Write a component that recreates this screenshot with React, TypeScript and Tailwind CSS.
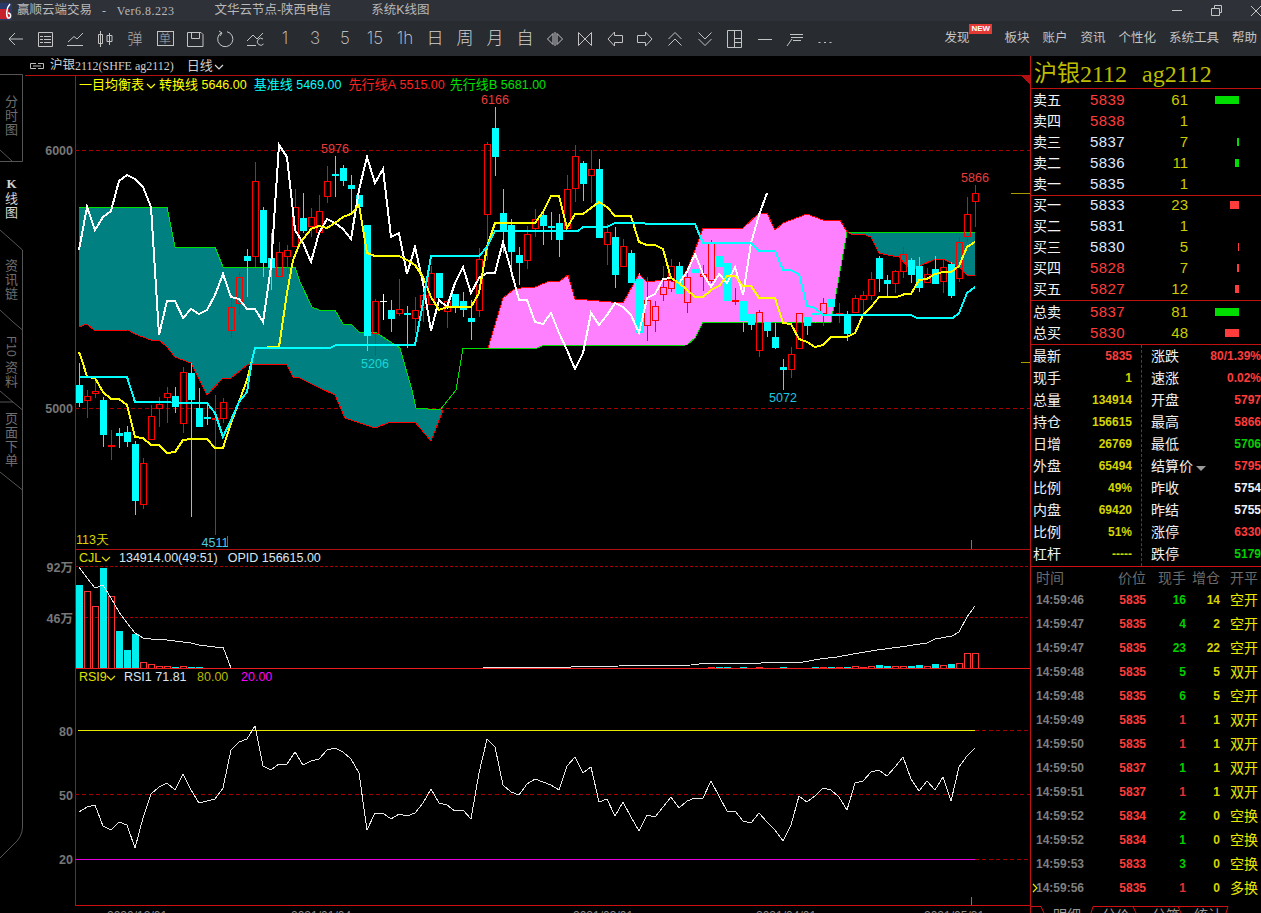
import React from "react";

type Candle = [string, number, number, number, number];

// [colour, body top, body bottom, wick top, wick bottom] in page pixels, one per day
const candles: Candle[] = [
  ["c",385,403,363,407],["r",396,401,390,418],["r",391,394,377,398],["c",400,435,397,447],["r",445,447,430,460],
  ["c",433,436,428,448],["c",432,442,426,447],["c",444,501,441,515],["r",463,505,458,509],["r",416,440,405,440],
  ["r",404,409,397,427],["r",393,398,387,423],["c",396,407,387,413],["r",372,424,367,433],["c",373,400,363,517],
  ["c",408,427,388,427],["c",417,419,405,425],["r",418,419,395,535],["r",402,419,398,423],["r",307,331,298,338],
  ["r",277,304,272,315],["c",256,261,249,297],["r",181,257,162,267],["c",210,263,207,277],["c",258,268,233,290],
  ["r",252,277,242,277],["r",250,257,245,273],["r",207,247,189,247],["c",218,231,193,233],["r",217,227,208,237],
  ["r",211,233,195,233],["r",181,197,166,203],["c",174,176,156,197],["c",168,181,165,186],["c",185,189,175,213],
  ["c",195,207,195,207],["c",225,336,225,351],["r",301,334,299,356],["w",301,302,294,320],["c",310,319,300,332],
  ["r",309,314,279,316],["c",313,315,306,348],["r",310,319,297,333],["r",295,308,280,322],["r",273,305,266,305],
  ["c",273,298,273,298],["r",301,312,300,328],["c",294,306,294,313],["c",301,310,292,317],["c",318,322,300,340],
  ["r",259,311,248,317],["r",144,215,142,260],["c",128,157,107,176],["c",213,231,189,253],["c",225,252,219,277],
  ["c",255,263,247,285],["r",234,261,226,269],["r",219,229,209,237],["c",215,226,212,245],["c",226,228,212,240],
  ["c",223,240,214,257],["r",189,229,175,229],["r",156,189,145,202],["c",163,184,161,201],["r",169,176,150,203],
  ["c",169,238,159,238],["r",232,245,224,265],["c",237,275,227,288],["r",246,267,239,267],["c",253,283,250,283],
  ["c",279,333,273,340],["r",300,326,277,341],["r",306,321,301,332],["r",287,295,266,301],["r",266,289,259,292],
  ["c",266,294,262,300],["r",277,303,267,313],["c",269,273,253,290],["r",274,277,265,291],["r",242,281,240,283],
  ["c",256,267,256,280],["c",263,301,257,303],["r",300,302,288,305],["c",301,321,293,332],["c",314,325,309,330],
  ["r",312,351,310,357],["c",322,331,322,337],["c",337,348,323,349],["c",367,370,359,390],["r",354,370,347,378],
  ["r",313,349,313,349],["c",317,326,313,335],["c",313,315,305,323],["r",303,314,298,326],["c",299,307,285,307],
  ["r",313,314,303,323],["c",315,334,311,341],["r",298,313,295,313],["r",295,300,291,313],["r",279,296,272,300],
  ["c",258,279,256,292],["c",280,284,275,296],["r",271,284,270,293],["r",254,272,247,278],["c",260,275,258,283],
  ["c",266,288,257,292],["r",274,283,268,283],["c",269,284,256,284],["r",267,282,260,293],["c",264,296,262,298],
  ["r",242,279,237,282],["r",214,237,197,242],["r",193,202,185,227],
];

const cx = (i: number) => 79.5 + 8 * i;

const white = "79,250 87,207 95,230 103,217 111,211 119,181 127,175 135,179 143,187 151,207 159,335 167,301 175,301 183,318 191,309 199,314 207,310 215,295 223,274 231,297 239,299 247,309 255,309 263,322 271,267 279,145 287,157 295,230 303,243 311,262 319,233 327,219 335,223 343,229 351,239 359,190 367,157 375,183 383,169 391,237 399,233 407,274 415,247 423,283 431,331 439,300 447,307 455,283 463,267 471,293 479,278 487,273 495,273 503,242 511,270 519,300 527,300 535,322 543,324 551,313 559,333 567,350 575,369 583,353 591,313 599,325 607,315 615,303 623,307 631,315 639,333 647,298 655,294 663,279 671,278 679,283 687,272 695,254 703,274 711,287 719,274 727,283 735,267 743,295 751,243 759,215 767,193";
const yellow = "79,352 82,360 87,377 95,378 103,392 111,399 119,399 127,405 135,437 143,438 151,445 159,445 167,453 175,452 183,440 191,439 207,439 215,448 223,448 231,423 239,402 247,380 255,348 279,347 287,293 293,260 300,243 311,229 319,226 327,228 335,223 343,217 351,214 359,205 367,253 375,256 399,256 407,260 415,265 423,277 431,297 439,310 447,307 471,307 479,293 487,247 495,223 535,223 543,212 551,196 559,196 567,228 575,214 583,214 599,202 607,207 615,216 631,216 639,242 647,245 655,245 663,249 671,278 679,283 687,290 695,297 703,297 711,290 719,286 727,276 735,276 743,286 751,286 759,298 775,298 783,323 791,324 799,339 807,342 815,347 823,345 831,337 847,337 855,333 863,315 871,307 879,297 897,297 905,294 911,294 919,280 927,279 935,274 943,272 951,272 959,266 967,247 975,242";
const kijun = "79,377 127,377 135,402 207,403 215,413 223,437 231,420 239,402 247,392 252,360 255,348 330,348 336,345 415,345 423,303 431,256 479,256 487,247 495,231 578,231 583,227 607,227 615,223 639,223 650,224 695,224 703,243 751,243 759,251 775,251 783,270 791,270 799,274 807,306 815,308 823,315 911,315 917,318 953,318 959,313 967,293 975,287";

const greenTop = "79,207 167,207 175,247 215,247 223,267 295,267 300,282 312,307 319,310 335,310 343,324 351,324 359,332 375,332 383,337 400,348 407,373 412,390 416,408 440,410 456,390 463,348 537,348 542,346 687,345 695,338 703,322 831,322 847,232 975,232";
const redEdge = "79,327 87,324 95,331 128,330 135,334 151,340 159,340 167,347 175,357 183,360 191,363 207,395 223,378 231,378 247,365 267,364 287,365 293,377 300,378 320,388 335,395 345,418 375,428 390,422 415,422 431,441 443,410";
const pinkTop = "488,348 503,298 513,290 525,287 533,288 547,282 560,281 568,275 575,299 623,303 639,274 647,282 663,280 679,282 687,270 695,250 703,228 743,228 759,213 767,213 775,230 783,223 807,214 823,220 840,220 847,232";
const redTail = "847,232 851,234 863,234 871,237 879,253 888,255 899,257 911,270 920,266 935,259 943,259 959,267 967,275 975,275";

const teal1 = "79,207 167,207 175,247 215,247 223,267 295,267 300,282 312,307 319,310 335,310 343,324 351,324 359,332 375,332 383,337 400,348 407,373 412,390 416,408 443,410 431,441 415,422 390,422 375,428 345,418 335,395 320,388 300,378 293,377 287,365 267,364 247,365 231,378 223,378 207,395 191,363 183,360 175,357 167,347 159,340 151,340 135,334 128,330 95,331 87,324 79,327";
const pink = `${pinkTop} 831,322 703,322 695,338 687,345 542,346 537,348`;
const teal2 = `847,232 975,232 ${redTail.split(" ").reverse().join(" ")}`;

const volHead: [string, number][] = [["c",585],["r",591],["r",606],["c",568],["r",596],["c",631],["c",650],["c",634],["r",662],["r",664],["r",666],["r",666],["c",667],["r",666],["c",667],["c",667]];
const volTail: [number, string, number][] = [[79,"r",667],[80,"c",667],[81,"c",667],[83,"c",667],[85,"r",667],[88,"c",667],[92,"c",667],[93,"r",667],[94,"c",667],[95,"r",667],[96,"c",667],[97,"r",666],[98,"r",667],[99,"r",666],[100,"c",665],[101,"c",666],[102,"r",666],[103,"r",666],[104,"c",666],[105,"c",665],[106,"r",666],[107,"c",664],[108,"r",665],[109,"c",664],[110,"r",663],[111,"r",653],[112,"r",653]];
const volMa1 = "79,567 87,578 95,588 103,585 111,598 119,612 127,623 135,633 143,638 151,639 159,639 167,640 175,641 191,643 199,645 215,647 223,647 231,668";
const volMa2 = "483,667 520,667 571,667 619,666 691,665 707,663 731,663 743,664 779,662 803,662 820,659 837,657 853,654 877,650 900,647 927,643 935,639 952,636 959,632 967,617 975,606";

const rsiY = [812,807,805,826,830,822,825,848,818,794,787,783,790,774,790,803,801,799,788,750,742,739,726,766,770,764,764,752,765,761,759,750,748,752,759,773,830,813,813,819,814,816,813,803,789,803,805,811,810,819,773,739,747,785,792,795,784,779,782,785,790,766,757,773,767,802,799,816,802,817,831,815,817,807,797,808,801,798,798,781,796,811,811,821,823,813,822,830,841,825,796,802,796,788,790,797,810,783,781,772,770,776,767,757,779,791,781,790,777,801,767,756,748];

const book = [
  { label: "卖五", price: "5839", red: true, vol: "61", bar: 24, col: "bg-[#00dd00]" },
  { label: "卖四", price: "5838", red: true, vol: "1", bar: 0, col: "bg-[#00dd00]" },
  { label: "卖三", price: "5837", red: false, vol: "7", bar: 2, col: "bg-[#00dd00]" },
  { label: "卖二", price: "5836", red: false, vol: "11", bar: 4, col: "bg-[#00dd00]" },
  { label: "卖一", price: "5835", red: false, vol: "1", bar: 0, col: "bg-[#00dd00]" },
  { label: "买一", price: "5833", red: false, vol: "23", bar: 9, col: "bg-[#ff3c3c]" },
  { label: "买二", price: "5831", red: false, vol: "1", bar: 0, col: "bg-[#ff3c3c]" },
  { label: "买三", price: "5830", red: false, vol: "5", bar: 1, col: "bg-[#ff3c3c]" },
  { label: "买四", price: "5828", red: true, vol: "7", bar: 2, col: "bg-[#ff3c3c]" },
  { label: "买五", price: "5827", red: true, vol: "12", bar: 4, col: "bg-[#ff3c3c]" },
  { label: "总卖", price: "5837", red: true, vol: "81", bar: 24, col: "bg-[#00dd00]" },
  { label: "总买", price: "5830", red: true, vol: "48", bar: 14, col: "bg-[#ff3c3c]" },
];

const statsLeft: [string, string, string][] = [
  ["最新", "5835", "text-[#ff3c3c]"], ["现手", "1", "text-[#d4d400]"], ["总量", "134914", "text-[#d4d400]"],
  ["持仓", "156615", "text-[#d4d400]"], ["日增", "26769", "text-[#d4d400]"], ["外盘", "65494", "text-[#d4d400]"],
  ["比例", "49%", "text-[#d4d400]"], ["内盘", "69420", "text-[#d4d400]"], ["比例", "51%", "text-[#d4d400]"],
  ["杠杆", "-----", "text-[#d4d400]"],
];
const statsRight: [string, string, string][] = [
  ["涨跌", "80/1.39%", "text-[#ff3c3c]"], ["速涨", "0.02%", "text-[#ff3c3c]"], ["开盘", "5797", "text-[#ff3c3c]"],
  ["最高", "5866", "text-[#ff3c3c]"], ["最低", "5706", "text-[#00d000]"], ["结算价", "5795", "text-[#ff3c3c]"],
  ["昨收", "5754", "text-[#eef2ff]"], ["昨结", "5755", "text-[#eef2ff]"], ["涨停", "6330", "text-[#ff3c3c]"],
  ["跌停", "5179", "text-[#00d000]"],
];

const trades: [string, string, string, boolean, string, string][] = [
  ["14:59:46", "5835", "16", true, "14", "空开"],
  ["14:59:47", "5835", "4", true, "2", "空开"],
  ["14:59:47", "5835", "23", true, "22", "空开"],
  ["14:59:48", "5835", "5", true, "5", "双开"],
  ["14:59:48", "5835", "6", true, "5", "空开"],
  ["14:59:49", "5835", "1", false, "1", "双开"],
  ["14:59:50", "5835", "1", false, "1", "双开"],
  ["14:59:50", "5837", "1", true, "1", "双开"],
  ["14:59:51", "5837", "1", false, "1", "双开"],
  ["14:59:52", "5834", "2", true, "0", "空换"],
  ["14:59:52", "5834", "1", true, "0", "空换"],
  ["14:59:53", "5833", "3", true, "0", "空换"],
  ["14:59:56", "5835", "1", false, "0", "多换"],
];

function Chevron({ className }: { className: string }) {
  return (
    <svg width="10" height="6" viewBox="0 0 10 6" className={className}>
      <path d="M1 1L5 5L9 1" fill="none" stroke="currentColor" strokeWidth="1.2" />
    </svg>
  );
}

function Ico({ d }: { d: string }) {
  return (
    <svg width="22" height="22" viewBox="0 0 22 22" fill="none" stroke="#c4c4c4" strokeWidth="1">
      <path d={d} />
    </svg>
  );
}

function Glyph({ t }: { t: string }) {
  return <span className="font-['Inter','Noto_Sans_CJK_SC',sans-serif] font-extralight text-[17px] leading-none text-[#d0d0d0]">{t}</span>;
}

const tools: React.ReactNode[] = [
  <Ico d="M5 11H19M11 5L5 11L11 17" />,
  <Ico d="M4.500 4.500H18.500V18.500H4.500ZM6 8.500H9M10 8.500H17M6 11.500H9M10 11.500H17M6 14.500H9M10 14.500H17" />,
  <Ico d="M3 17.500H19M4 14L10 8.500L13 11L19 5" />,
  <Ico d="M6.500 3V19M4.500 6.500H8.500V15.500H4.500ZM15.500 5V17M13 7.500H18V13.500H13Z" />,
  <span className="text-[15px] font-light leading-none text-[#a8a8a8]">弹</span>,
  <div className="w-[17px] h-[15px] border border-[#c4c4c4] flex items-center justify-center text-[12px] font-light leading-none text-[#b0b0b0]">单</div>,
  <Ico d="M3.500 4.500H17L19 6.500V18.500H3.500ZM7.500 4.500V10.500H15.500V4.500" />,
  <Ico d="M7.500 4.500A7.600 7.600 0 1 0 13 3.700M5 3L8 5L6 8" />,
  <Ico d="M3 17.500H12M3 13L9 7L13 11L19 5M19 11A3.500 3.500 0 1 0 19.500 16" />,
  <Glyph t="1" />, <Glyph t="3" />, <Glyph t="5" />, <Glyph t="15" />, <Glyph t="1h" />,
  <Glyph t="日" />, <Glyph t="周" />, <Glyph t="月" />, <Glyph t="自" />,
  <Ico d="M9 5.500L3.500 11L9 16.500ZM13 5.500L18.500 11L13 16.500ZM11 4V18" />,
  <Ico d="M4.500 4.500V17.500L11 11ZM17.500 4.500V17.500L11 11Z" />,
  <Ico d="M10.500 4L4 11L10.500 18V14.500H18.500V7.500H10.500Z" />,
  <Ico d="M11.500 4L18 11L11.500 18V14.500H3.500V7.500H11.500Z" />,
  <Ico d="M4.500 11L11 4.500L17.500 11M4.500 17.500L11 11L17.500 17.500" />,
  <Ico d="M4.500 4.500L11 11L17.500 4.500M4.500 11L11 17.500L17.500 11" />,
  <Ico d="M3.500 2.500H17.500V19.500H3.500ZM10.500 2.500V19.500M10.500 10.500H17.500M10.500 14.500H17.500" />,
  <Ico d="M4 11.500H18" />,
  <Ico d="M6 6.500H19M7 9.500H19M9 12.500H17M3 18L8 11" />,
  <Ico d="M4.500 14.500H6.500M10 14.500H12M15.500 14.500H17.500" />,
];

function TitleBar() {
  return (
    <div className="h-[21px] bg-[#2e3138] flex items-center text-[#b8b8b8] text-[12.500px] relative shrink-0">
      <svg width="14" height="20" viewBox="0 0 14 20" className="shrink-0">
        <rect x="0" y="2" width="12" height="17" fill="#2a3a68" />
        <rect x="0" y="8" width="9" height="10" fill="#c8202a" />
        <path d="M10 3C6 7 6 15 8 17C11 18 12 12 8 12" fill="none" stroke="#ffffff" strokeWidth="1.500" />
      </svg>
      <span className="ml-[3px]">赢顺云端交易</span>
      <span className="ml-[10px] font-['Liberation_Serif',serif] text-[12px] tracking-[0.500px] whitespace-pre">-   Ver6.8.223</span>
      <span className="ml-[40px]">文华云节点-陕西电信</span>
      <span className="ml-[40px]">系统K线图</span>
      <div className="ml-auto flex items-center">
        <svg width="100" height="21" viewBox="0 0 100 21" fill="none" stroke="#c4c4c4" strokeWidth="1">
          <path d="M11 10.500H21" />
          <path d="M50.500 8.500H58.500V15.500H50.500ZM53.500 8.500V5.500H60.500V12.500H58.500" />
          <path d="M90 6L100 16M100 6L90 16" />
        </svg>
      </div>
    </div>
  );
}

function Toolbar() {
  return (
    <div className="h-[35px] bg-[#282b30] flex items-center shrink-0">
      {tools.map((t, i) => (
        <div key={i} className="w-[30px] h-[30px] flex items-center justify-center">{t}</div>
      ))}
      <div className="ml-auto flex items-center gap-[13px] pr-[4px] text-[12.500px] text-[#c4c4c4]">
        <span className="relative mr-[22px]">
          发现
          <span className="absolute -top-[5px] left-[25px] bg-[#e53935] text-white text-[8px] font-bold leading-[10px] px-[2px]">NEW</span>
        </span>
        <span>板块</span>
        <span>账户</span>
        <span>资讯</span>
        <span>个性化</span>
        <span>系统工具</span>
        <span>帮助</span>
      </div>
    </div>
  );
}

function Sidebar() {
  return (
    <div className="w-[23px] shrink-0 relative flex flex-col items-center pt-[38px] text-[13px] leading-[14px] text-[#6e6e6e] font-['Noto_Sans_CJK_SC',sans-serif]">
      <svg width="23" height="857" viewBox="0 56 23 857" className="absolute left-0 top-0" fill="none" stroke="#555555" strokeWidth="1">
        <path d="M0 74.500H22.500V161.500H0M0 150L12 161" />
        <path d="M0 230L13 241.500L22.500 250V330L13 322L0 310" />
        <path d="M22.500 330V410L13 402H0M0 391L13 402" />
        <path d="M22.500 410V827Q22.500 837 13 845L0 858M0 472L22.500 490" />
      </svg>
      <div className="flex flex-col items-center"><span>分</span><span>时</span><span>图</span></div>
      <div className="flex flex-col items-center mt-[41px] text-[#d4d4d4]"><span className="font-bold font-['Liberation_Serif',serif]">K</span><span>线</span><span>图</span></div>
      <div className="flex flex-col items-center mt-[39px]"><span>资</span><span>讯</span><span>链</span></div>
      <div className="flex flex-col items-center mt-[36px]"><span className="[writing-mode:vertical-rl] leading-none text-[12px] h-[24px] font-['Liberation_Sans',sans-serif]">F10</span><span>资</span><span>料</span></div>
      <div className="flex flex-col items-center mt-[23px]"><span>页</span><span>面</span><span>下</span><span>单</span></div>
    </div>
  );
}

function AxisLabel({ y, t, offset }: { y: number; t: string; offset: number }) {
  return (
    <span
      className="absolute right-[2px] text-[12.500px] leading-none font-bold text-[#777777] -translate-y-1/2"
      style={{ top: y - offset + 1 }}
    >
      {t}
    </span>
  );
}

const DashRed = ({ y, x1 = 75, x2 = 1030 }: { y: number; x1?: number; x2?: number }) => (
  <line x1={x1} x2={x2} y1={y + 0.5} y2={y + 0.5} stroke="#a80000" strokeDasharray="4 3" />
);

function MainPane() {
  return (
    <div className="flex h-[474px] shrink-0">
      <div className="w-[52px] relative shrink-0">
        <div className="absolute top-0 left-[2px] right-0 h-px bg-[#b01010]" />
        <AxisLabel y={150} t="6000" offset={75} />
        <AxisLabel y={408} t="5000" offset={75} />
      </div>
      <div className="relative w-[955px] shrink-0">
        <svg width="955" height="474" viewBox="75 75 955 474" shapeRendering="crispEdges" className="absolute inset-0 font-['Liberation_Sans',sans-serif]">
          <line x1="75" x2="1030" y1="75.500" y2="75.500" stroke="#b01010" />
          <line x1="75.500" x2="75.500" y1="75" y2="549" stroke="#b01010" />
          <polygon points="1020,75 1030,75 1030,85" fill="#b01010" />
          <DashRed y={150} />
          <DashRed y={408} />
          <polygon points={teal1} fill="#008080" />
          <polygon points={pink} fill="#ff80ff" />
          <polygon points={teal2} fill="#008080" />
          <polyline points={greenTop} fill="none" stroke="#00e000" />
          <polyline points={redEdge} fill="none" stroke="#ff0000" />
          <polyline points={pinkTop} fill="none" stroke="#ff0000" />
          <polyline points={redTail} fill="none" stroke="#ff0000" />
          {candles.map(([c, top, bot, wt, wb], i) => {
            const x = cx(i);
            if (c === "r") {
              return (
                <g key={i} stroke="#ff0000" fill="none">
                  <line x1={x} x2={x} y1={wt} y2={top} />
                  <line x1={x} x2={x} y1={bot} y2={wb} />
                  <rect x={x - 3} y={top + 0.5} width={6} height={Math.max(bot - top - 1, 1)} />
                </g>
              );
            }
            const col = c === "w" ? "#ffffff" : "#00ffff";
            return (
              <g key={i}>
                <line x1={x} x2={x} y1={wt} y2={wb} stroke={col} />
                <rect x={x - 3.5} y={top} width={7} height={bot - top} fill={col} />
              </g>
            );
          })}
          <polyline points={white} fill="none" stroke="#ffffff" strokeWidth="2" />
          <polyline points={yellow} fill="none" stroke="#ffff00" strokeWidth="2" />
          <polyline points={kijun} fill="none" stroke="#00ffff" strokeWidth="2" />
          <line x1="1011" x2="1030" y1="193.500" y2="193.500" stroke="#a89a00" />
          <line x1="1021" x2="1030" y1="362.500" y2="362.500" stroke="#a89a00" />
          <line x1="971.500" x2="971.500" y1="540" y2="549" stroke="#777777" />
          <line x1="227.500" x2="227.500" y1="536" y2="546" stroke="#0a8a8a" />
          <g fontSize="12.500" textAnchor="middle" shapeRendering="auto">
            <text x="495" y="104" fill="#e83c3c">6166</text>
            <text x="335" y="153" fill="#e83c3c">5976</text>
            <text x="375" y="368" fill="#18d8d8">5206</text>
            <text x="783" y="402" fill="#18c8e0">5072</text>
            <text x="975" y="182" fill="#e83c3c">5866</text>
            <text x="215" y="547" fill="#4ac8e8">4511</text>
          </g>
          <text x="76" y="544" fontSize="12.500" fill="#d8d800" shapeRendering="auto">113天</text>
        </svg>
        <div className="absolute left-[4px] top-[1px] h-[18px] flex items-center gap-[7px] text-[12.500px] whitespace-nowrap">
          <span className="text-[#ffff00] text-[13px] flex items-center gap-[2px] w-[73px]">一目均衡表<Chevron className="text-[#ffff00] mt-[2px] shrink-0" /></span>
          <span className="text-[#ffff00]"><span className="text-[13px]">转换线</span> 5646.00</span>
          <span className="text-[#00ffff]"><span className="text-[13px]">基准线</span> 5469.00</span>
          <span className="text-[#ff2020] -mr-[2px]"><span className="text-[13px]">先行线A</span> 5515.00</span>
          <span className="text-[#00e000]"><span className="text-[13px]">先行线B</span> 5681.00</span>
        </div>
      </div>
    </div>
  );
}

function VolPane() {
  return (
    <div className="flex h-[119px] shrink-0">
      <div className="w-[52px] relative shrink-0">
        <AxisLabel y={567} t="92万" offset={549} />
        <AxisLabel y={618} t="46万" offset={549} />
      </div>
      <div className="relative w-[955px] shrink-0">
        <svg width="955" height="119" viewBox="75 549 955 119" shapeRendering="crispEdges" className="absolute inset-0">
          <line x1="75" x2="1030" y1="549.500" y2="549.500" stroke="#b01010" />
          <line x1="75.500" x2="75.500" y1="549" y2="668" stroke="#b01010" />
          <line x1="75" x2="1030" y1="566.500" y2="566.500" stroke="#a80000" strokeDasharray="3 2" />
          <line x1="75" x2="1030" y1="617.500" y2="617.500" stroke="#a80000" strokeDasharray="3 2" />
          {[...volHead.map(([c, t], i) => [i, c, t] as [number, string, number]), ...volTail].map(([i, c, t]) => {
            const x = cx(i);
            return c === "c" ? (
              <rect key={i} x={x - 3.5} y={t} width={7} height={668 - t} fill="#00eeee" />
            ) : (
              <rect key={i} x={x - 3} y={t + 0.5} width={6} height={668 - t} fill="none" stroke="#ff3232" />
            );
          })}
          <polyline points={volMa1} fill="none" stroke="#e8e8e8" />
          <polyline points={volMa2} fill="none" stroke="#e8e8e8" />
        </svg>
        <div className="absolute left-[4px] top-[1px] h-[16px] flex items-center text-[12.500px] text-[#dce6f0] whitespace-nowrap">
          <span className="text-[#e0e000] w-[22px]">CJL</span>
          <Chevron className="text-[#e0e000] mt-[2px] mr-[8px]" />
          <span>134914.00(49:51)</span>
          <span className="ml-[10px]">OPID 156615.00</span>
        </div>
      </div>
    </div>
  );
}

function RsiPane() {
  return (
    <div className="flex h-[238px] shrink-0">
      <div className="w-[52px] relative shrink-0">
        <AxisLabel y={731} t="80" offset={668} />
        <AxisLabel y={795} t="50" offset={668} />
        <AxisLabel y={859} t="20" offset={668} />
      </div>
      <div className="relative w-[955px] shrink-0">
        <svg width="955" height="238" viewBox="75 668 955 238" shapeRendering="crispEdges" className="absolute inset-0">
          <line x1="75" x2="1030" y1="668.500" y2="668.500" stroke="#ee1c1c" />
          <line x1="75.500" x2="75.500" y1="668" y2="906" stroke="#b01010" />
          <line x1="78" x2="975" y1="730.500" y2="730.500" stroke="#e8e800" />
          <DashRed y={730} x1={975} />
          <DashRed y={794} />
          <line x1="75" x2="975" y1="859.500" y2="859.500" stroke="#e000e0" />
          <DashRed y={859} x1={975} />
          <polyline points={rsiY.map((y, i) => `${Math.floor(cx(i))},${y}`).join(" ")} fill="none" stroke="#e8e8e8" />
          <line x1="971.500" x2="971.500" y1="897" y2="906" stroke="#777777" />
          <line x1="75" x2="1030" y1="905.500" y2="905.500" stroke="#cc1010" />
        </svg>
        <div className="absolute left-[4px] top-0 h-[18px] flex items-center text-[12.500px] whitespace-nowrap">
          <span className="text-[#e0e000] w-[27px]">RSI9</span>
          <Chevron className="text-[#e0e000] mt-[2px] mr-[8px]" />
          <span className="text-[#dce6f0] w-[73px]">RSI1 71.81</span>
          <span className="text-[#b8b800] w-[44px]">80.00</span>
          <span className="text-[#ff00ff]">20.00</span>
        </div>
      </div>
    </div>
  );
}

function DateRow() {
  return (
    <div className="h-[7px] overflow-hidden flex pl-[84px] pt-[4px] text-[12px] leading-none text-[#8a8a8a] whitespace-nowrap shrink-0">
      <span className="w-[63px]">2020/12/01</span>
      <span className="w-[65px] ml-[121px]">2021/01/04</span>
      <span className="w-[61px] ml-[217px]">2021/03/01</span>
      <span className="w-[62px] ml-[122px]">2021/04/01</span>
      <span className="w-[64px] ml-[106px]">2021/05/31</span>
    </div>
  );
}

function BookRow({ r }: { r: (typeof book)[number] }) {
  return (
    <div className="h-[21px] flex items-center shrink-0">
      <span className="w-[59px] pl-[2px] text-[14px] text-[#f4f4f4] leading-none">{r.label}</span>
      <span className={`w-[40px] text-[15px] tracking-[0.400px] leading-none ${r.red ? "text-[#ff3c3c]" : "text-[#dfe9ff]"}`}>{r.price}</span>
      <span className="w-[58px] text-right text-[15px] text-[#cccc00] leading-none">{r.vol}</span>
      <div className="w-[51px] flex justify-end">
        <div className={`h-[8px] ${r.col}`} style={{ width: r.bar }} />
      </div>
    </div>
  );
}

function StatCol({ rows, className }: { rows: [string, string, string][]; className: string }) {
  return (
    <div className={className}>
      {rows.map(([l, v, c]) => (
        <div key={l + v} className="h-[22px] flex items-center justify-between relative">
          <span className="text-[14px] leading-none text-[#f0f0f0] flex items-center">
            {l}
            {l === "结算价" && <span className="ml-[3px] mt-[4px] w-0 h-0 border-x-[5px] border-x-transparent border-t-[5px] border-t-[#9a9a9a]" />}
          </span>
          <span className={`text-[12px] font-bold leading-none ${c}`}>{v}</span>
        </div>
      ))}
    </div>
  );
}

function TradeRow({ t, last }: { t: (typeof trades)[number]; last: boolean }) {
  return (
    <div className="h-[24px] flex items-center text-[12px] font-bold leading-none relative">
      {last && <Chevron className="absolute left-[-1px] top-[9px] -rotate-90 text-[#e8e800]" />}
      <span className="w-[70px] pl-[5px] text-[#7e7e7e]">{t[0]}</span>
      <span className="w-[45px] text-right text-[#ff3c3c]">{t[1]}</span>
      <span className={`w-[40px] text-right ${t[3] ? "text-[#00d000]" : "text-[#e83030]"}`}>{t[2]}</span>
      <span className="w-[34px] text-right text-[#d4d400]">{t[4]}</span>
      <span className="ml-[10px] text-[14px] font-normal text-[#e8e800]">{t[5]}</span>
    </div>
  );
}

function RightPanel() {
  return (
    <div className="w-[231px] shrink-0 border-l border-[#c01010] flex flex-col overflow-hidden">
      <div className="h-[33px] shrink-0 border-b border-[#c01010] pl-[3px] pt-[3px] flex items-center text-[#bdbd00] leading-none font-['Liberation_Serif','Noto_Sans_CJK_SC',serif] whitespace-pre">
        <span className="text-[23px]">沪银</span>
        <span className="text-[24px]">2112</span>
        <span className="text-[24px] ml-[15px]">ag2112</span>
      </div>
      <div className="h-[107px] shrink-0 border-b border-[#c01010]">
        {book.slice(0, 5).map((r) => <BookRow key={r.label} r={r} />)}
      </div>
      <div className="h-[105px] shrink-0 border-b border-[#c01010] -mb-px">
        <div className="-mt-[2px]">
          {book.slice(5, 10).map((r) => <BookRow key={r.label} r={r} />)}
        </div>
      </div>
      <div className="h-[45px] shrink-0 border-y border-[#c01010]">
        {book.slice(10).map((r) => <BookRow key={r.label} r={r} />)}
      </div>
      <div className="h-[222px] shrink-0 border-b border-[#d01010] flex">
        <StatCol rows={statsLeft} className="w-[111px] shrink-0 pl-[2px] pr-[9px] border-r border-dashed border-[#c01010]" />
        <StatCol rows={statsRight} className="flex-1 pl-[9px]" />
      </div>
      <div className="h-[21px] shrink-0 flex items-center text-[14px] text-[#6c6c6c] leading-none">
        <span className="w-[70px] pl-[5px]">时间</span>
        <span className="w-[45px] text-right">价位</span>
        <span className="w-[40px] text-right">现手</span>
        <span className="w-[34px] text-right">增仓</span>
        <span className="ml-[10px]">开平</span>
      </div>
      <div className="flex-1 min-h-0 overflow-hidden">
        {trades.map((t, i) => <TradeRow key={i} t={t} last={i === trades.length - 1} />)}
      </div>
      <div className="h-[7px] shrink-0 relative overflow-hidden">
        <svg width="230" height="7" viewBox="1031 906 230 7" fill="none" stroke="#d01010" className="absolute inset-0">
          <path d="M1031 906.500H1041L1044 913M1091 913L1093 906.500H1228L1226 913M1133 906.500L1136 913M1178 906.500L1181 913" />
        </svg>
        <div className="flex pt-[2px] text-[14px] leading-none text-[#9a9a9a]">
          <span className="ml-[22px]">明细</span>
          <span className="ml-[21px]">分价</span>
          <span className="ml-[22px]">分笔</span>
          <span className="ml-[14px]">统计</span>
        </div>
      </div>
    </div>
  );
}

export default function App() {
  return (
    <div className="w-[1261px] h-[913px] bg-black overflow-hidden flex flex-col font-['Liberation_Sans','Noto_Sans_CJK_SC',sans-serif]">
      <TitleBar />
      <Toolbar />
      <div className="flex h-[857px]">
        <Sidebar />
        <div className="w-[1007px] shrink-0 flex flex-col">
          <div className="h-[19px] shrink-0 flex items-center pl-[6px] text-[12.500px] text-[#cfcfcf] whitespace-pre">
            <svg width="16" height="8" viewBox="0 0 16 8" fill="none" stroke="#bdbdbd" className="mr-[5px]">
              <path d="M7 1.500H1.500V6.500H7M9 1.500H14.500V6.500H9M4 4H12" />
            </svg>
            <span>沪银</span>
            <span className="font-['Liberation_Serif',serif] text-[12px]">2112(SHFE ag2112)</span>
            <span className="ml-[13px] text-[13px]">日线</span>
            <Chevron className="ml-[1px] mt-[2px] text-[#d8d8d8]" />
          </div>
          <MainPane />
          <VolPane />
          <RsiPane />
          <DateRow />
        </div>
        <RightPanel />
      </div>
    </div>
  );
}
